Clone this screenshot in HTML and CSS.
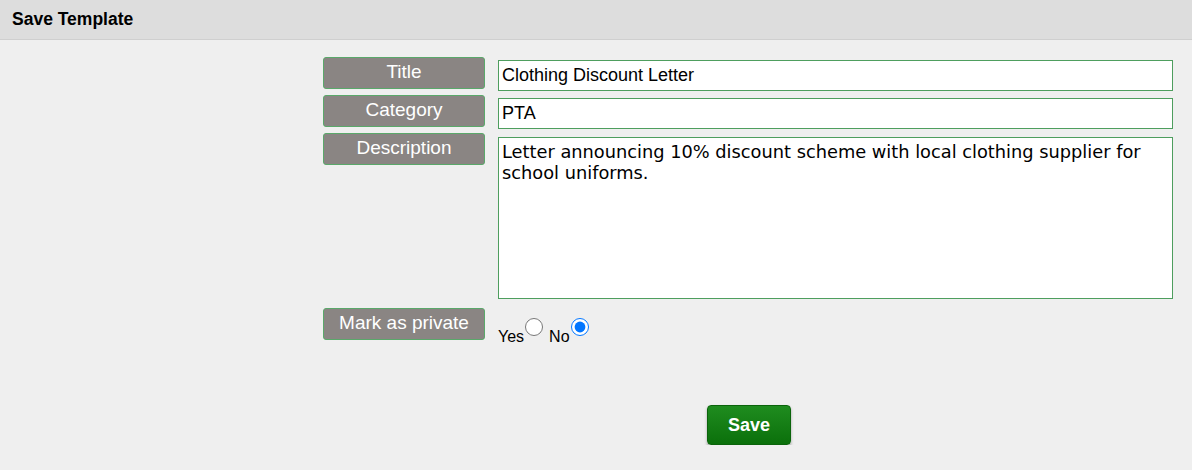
FILE: index.html
```html
<!DOCTYPE html>
<html lang="en">
<head>
    <meta charset="UTF-8">
    <title>Save Template</title>
    <link rel="stylesheet" href="styles.css">
</head>
<body>
    <!-- Header bar -->
    <div class="header">Save Template</div>

    <div class="form">
        <div class="label">Title</div>
        <input type="text" class="field" value="Clothing Discount Letter">

        <div class="label">Category</div>
        <input type="text" class="field" value="PTA">

        <div class="label">Description</div>
        <textarea class="field notes">Letter announcing 10% discount scheme with local clothing supplier for school uniforms.</textarea>

        <div class="label">Mark as private</div>
        <div class="radios">
            <span>Yes</span><input type="radio" name="private">
            <span class="no">No</span><input type="radio" name="private" checked>
        </div>

        <div class="actions">
            <button class="save">Save</button>
        </div>
    </div>
</body>
</html>
```

FILE: styles.css
```css
/* General Styling */
body {
    margin: 0;
    background: #efefef;
    font-family: 'Liberation Sans', Arial, sans-serif;
    color: #000;
}

.header {
    height: 39px;
    line-height: 38px;
    padding-left: 12px;
    background: #dddddd;
    border-bottom: 1px solid #cfcfcf;
    font-size: 17.5px;
    font-weight: bold;
}

/* Form grid */
.form {
    display: grid;
    grid-template-columns: 162px 675px;
    column-gap: 13px;
    row-gap: 4px;
    align-items: start;
    width: 851px;
    margin-left: 323px;
    padding-top: 17px;
}

.label {
    height: 30px;
    line-height: 28px;
    background: #8a8583;
    border: 1px solid #5aa86a;
    border-radius: 3px;
    color: #fff;
    font-size: 19px;
    text-align: center;
}

.field {
    box-sizing: border-box;
    width: 675px;
    height: 31px;
    margin: 3px 0 0 0;
    padding: 0 3px;
    border: 1px solid #4e9e5e;
    background: #fff;
    font-family: 'Liberation Sans', Arial, sans-serif;
    font-size: 18px;
    color: #000;
    outline: none;
}

.notes {
    height: 162px;
    margin: 4px 0 5px 0;
    padding: 3px 3px;
    font-family: 'DejaVu Sans', Verdana, sans-serif;
    font-size: 17.8px;
    line-height: 21px;
    resize: none;
}

.radios {
    display: flex;
    align-items: flex-start;
    padding-top: 10px;
    font-size: 16px;
}

.radios span {
    margin-top: 10px;
}

.radios .no {
    margin-left: 6px;
}

.radios input {
    width: 18px;
    height: 18px;
    margin: 0 0 0 1px;
}

.actions {
    grid-column: 1 / 3;
    display: flex;
    justify-content: center;
    padding-top: 55px;
}

.save {
    width: 84px;
    height: 40px;
    margin-left: 2px;
    background: linear-gradient(to bottom, #1f8c1f, #0b700b);
    border: 1px solid #0b640b;
    border-radius: 4px;
    box-shadow: 0 2px 3px rgba(0, 0, 0, 0.3);
    color: #fff;
    font-family: 'Liberation Sans', Arial, sans-serif;
    font-size: 18px;
    font-weight: bold;
    cursor: pointer;
}
```
